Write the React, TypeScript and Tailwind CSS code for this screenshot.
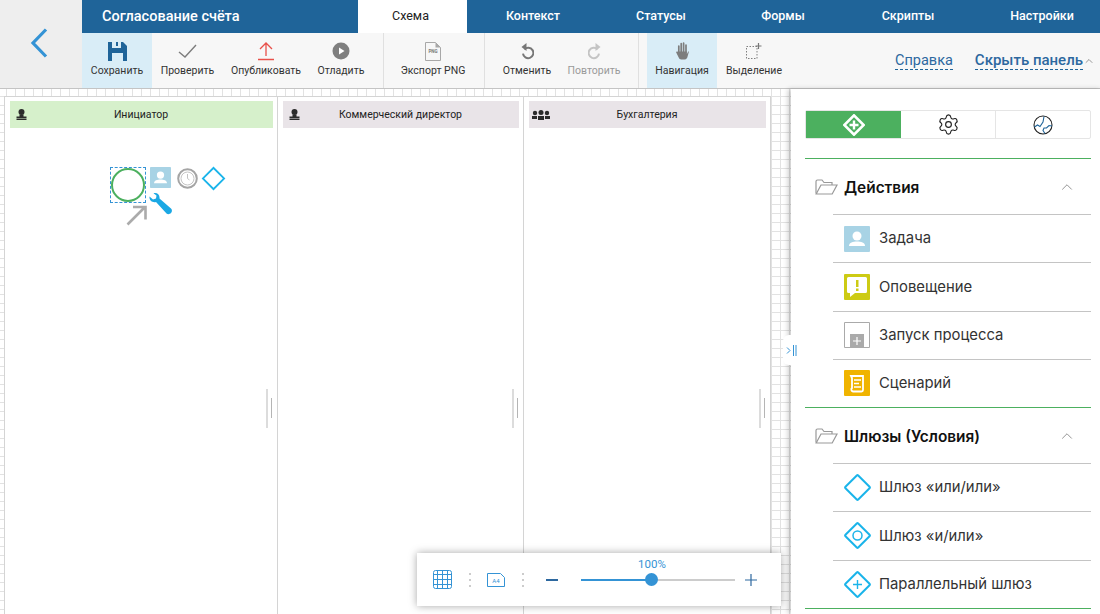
import { ChevronUp, Settings } from "lucide-react";
import type { ReactNode } from "react";

const FONT = "font-['Roboto','Liberation_Sans',sans-serif]";

const tabs = [
    { name: "Контекст", cls: "w-[132px]" },
    { name: "Статусы", cls: "w-[124px]" },
    { name: "Формы", cls: "w-[120px]" },
    { name: "Скрипты", cls: "w-[130px]" },
    { name: "Настройки", cls: "w-[127px] pl-[11px]" },
];

function ToolButton({ icon, label, width, active, muted }: { icon: ReactNode; label: string; width: string; active?: boolean; muted?: boolean }) {
    return (
        <div className={`${width} h-full flex flex-col items-center shrink-0 ${active ? "bg-[#d9edf7]" : ""}`}>
            <div className="h-[33px] flex items-center justify-center pt-[3px]">{icon}</div>
            <span className={`text-[10.5px] leading-none whitespace-nowrap ${muted ? "text-[#9a9a9a]" : "text-[#333]"}`}>{label}</span>
        </div>
    );
}

function Divider() {
    return <div className="w-px h-full bg-[#e0e0e0] shrink-0" />;
}

function SaveIcon() {
    return (
        <svg width="19" height="19" viewBox="0 0 19 19">
            <path fill="#1f6499" fillRule="evenodd" d="M0 0h15l4 4v15H0zM4 0v6h9V0h-3v4H8V0zM4 11v8h11v-8z" />
        </svg>
    );
}

function CheckIcon() {
    return (
        <svg width="19" height="15" viewBox="0 0 19 15" fill="none">
            <path d="M1 8l6 5L18 1" stroke="#7d7d7d" strokeWidth="1.4" />
        </svg>
    );
}

function PublishIcon() {
    return (
        <svg width="16" height="19" viewBox="0 0 16 19" fill="none">
            <path d="M8 14V1M2 7l6-6 6 6" stroke="#e8504a" strokeWidth="1.3" />
            <path d="M0 17.5h16" stroke="#e8504a" strokeWidth="1.5" />
        </svg>
    );
}

function PlayIcon() {
    return (
        <svg width="18" height="18" viewBox="0 0 18 18">
            <circle cx="9" cy="9" r="8.5" fill="#7f7f7f" />
            <path d="M7 5.5l5.5 3.5L7 12.5z" fill="#fff" />
        </svg>
    );
}

function PngIcon() {
    return (
        <svg width="16" height="19" viewBox="0 0 16 19" fill="none">
            <path d="M.5.5h10l5 5v13H.5z" fill="#f7f7f7" stroke="#a8a8a8" />
            <path d="M10.5.5v5h5z" fill="#a8a8a8" />
            <text x="8" y="11" textAnchor="middle" fontSize="4.5" fontWeight="700" fill="#777" fontFamily="Roboto">PNG</text>
        </svg>
    );
}

function UndoIcon({ color, flip }: { color: string; flip?: boolean }) {
    return (
        <svg width="13" height="17" viewBox="0 0 13 17" fill="none" className={flip ? "-scale-x-100" : ""}>
            <path d="M3.4 6.4A5.2 5.2 0 1 1 2 10.6" stroke={color} strokeWidth="2" />
            <path d="M5.5 0v8L.5 4z" fill={color} />
        </svg>
    );
}

function HandIcon() {
    return (
        <svg width="13" height="18" viewBox="0 0 13 18" fill="none">
            <path d="M2.800 11V4M5.200 10V1.500M7.600 10V1.200M10 10V3" stroke="#7d7d7d" strokeWidth="1.700" strokeLinecap="round" />
            <path d="M1.900 9.500h9v2.500l1.500-2.700 .5.400-1.200 4.300c-.4 2-1.300 3.500-3 3.500H5.200c-1.200 0-1.900-.7-2.400-1.700L.2 10.500c-.3-.8.700-1.300 1.200-.7z" fill="#7d7d7d" />
        </svg>
    );
}

function SelectIcon() {
    return (
        <svg width="16" height="16" viewBox="0 0 16 16" fill="none">
            <path d="M.5 3.500h10.500v12H.5z" stroke="#808080" strokeDasharray="1.5 1.5" />
            <path d="M12.500 0v6M9.500 3h6" stroke="#777" strokeWidth="1.200" />
        </svg>
    );
}

function PersonIcon() {
    return (
        <svg width="11" height="11" viewBox="0 0 11 11">
            <circle cx="5.500" cy="3" r="3" fill="#2b2b2b" />
            <path d="M3.500 5.500h4v2h3v2H.5v-2h3zM.5 10h10v1H.5z" fill="#2b2b2b" />
        </svg>
    );
}

function GroupIcon() {
    return (
        <svg width="18" height="10" viewBox="0 0 18 10" fill="#2b2b2b" className="shrink-0">
            <circle cx="3" cy="3" r="2.200" />
            <circle cx="9" cy="2.500" r="2.500" />
            <circle cx="15" cy="3" r="2.200" />
            <path d="M0 6h5v3H0zM6 6h6v4H6zM13 6h5v3h-5z" />
        </svg>
    );
}

function TaskIcon({ size }: { size: number }) {
    return (
        <svg width={size} height={size} viewBox="0 0 26 26">
            <rect width="26" height="26" rx="1" fill="#a8d3e5" />
            <circle cx="13" cy="10" r="4.500" fill="#fff" />
            <path d="M5 20c0-3.500 4-4.500 8-4.500s8 1 8 4.500z" fill="#fff" />
        </svg>
    );
}

function AlertIcon() {
    return (
        <svg width="26" height="26" viewBox="0 0 26 26">
            <rect width="26" height="26" rx="1" fill="#cdcb14" />
            <path d="M4.500 3h17a1.500 1.500 0 0 1 1.500 1.500v13a1.500 1.500 0 0 1-1.500 1.500H11l-5 4v-4H4.500A1.500 1.500 0 0 1 3 17.500v-13A1.500 1.500 0 0 1 4.500 3z" fill="#fff" />
            <path d="M12 6h2.500v7H12zM12 14.500h2.500V17H12z" fill="#cdcb14" />
        </svg>
    );
}

function SubprocessIcon() {
    return (
        <svg width="26" height="26" viewBox="0 0 26 26" fill="none">
            <path d="M.5.5h25v25H.5z" fill="#fff" stroke="#aaa" />
            <rect x="6" y="12" width="14" height="14" fill="#aaa" />
            <path d="M13 15v8M9 19h8" stroke="#fff" strokeWidth="1.200" />
        </svg>
    );
}

function ScriptIcon() {
    return (
        <svg width="26" height="26" viewBox="0 0 26 26" fill="none">
            <rect width="26" height="26" rx="1" fill="#f0b400" />
            <path d="M7 6h12v14a1.500 1.500 0 0 1-1.500 1.500H9A2 2 0 0 1 8 18V8z" stroke="#fff" strokeWidth="1.800" />
            <path d="M10 10h7M10 13.500h5M10 17h7" stroke="#fff" strokeWidth="1.500" />
        </svg>
    );
}

function GatewayIcon({ inner }: { inner?: "circle" | "plus" }) {
    return (
        <svg width="27" height="27" viewBox="0 0 27 27" fill="none" stroke="#1ab4ea">
            <rect x="4.500" y="4.500" width="18" height="18" rx="1" transform="rotate(45 13.500 13.500)" strokeWidth="2" />
            {inner === "circle" && <circle cx="13.500" cy="13.500" r="4.500" strokeWidth="1.500" />}
            {inner === "plus" && <path d="M13.500 9v9M9 13.500h9" strokeWidth="1.400" />}
        </svg>
    );
}

function FolderIcon() {
    return (
        <svg width="23" height="16" viewBox="0 0 23 16" fill="none" stroke="#999" strokeWidth="1.200">
            <path d="M1 14.500V2.500A1.500 1.500 0 0 1 2.500 1H7l2 2.500h8V6" />
            <path d="M1.200 15h16l4.800-9H6z" />
        </svg>
    );
}

function PaletteIcon() {
    return (
        <svg width="22" height="22" viewBox="0 0 22 22" fill="none">
            <rect x="4.200" y="4.200" width="13.600" height="13.600" transform="rotate(45 11 11)" stroke="#fff" strokeWidth="2.600" />
            <path d="M11 6.500v9M6.500 11h9" stroke="#fff" strokeWidth="2.400" />
        </svg>
    );
}

function GlobeIcon() {
    return (
        <svg width="20" height="20" viewBox="0 0 20 20" fill="none" stroke="#222" strokeWidth="1.100">
            <circle cx="10" cy="10" r="9" />
            <path d="M1.500 12l3-2 2.500 1.500L10 7l1-5.500M19 11l-3-.5-2.500 2.500-2.500 0L10 15.500l2 3" stroke="#1f6499" />
        </svg>
    );
}

function Lane({ title, icon, width, header }: { title: string; icon: ReactNode; width: string; header: string }) {
    return (
        <div className={`${width} relative h-full border-r border-[#d4d4d4] shrink-0 pt-[4px] pl-[5px] pr-[4px]`}>
            <div className={`h-[27px] flex items-center text-[10.5px] text-[#222] pl-[6px] ${header}`}>
                <span className="w-[11px] flex justify-center">{icon}</span>
                <span className="flex-1 text-center pr-[18px]">{title}</span>
            </div>
            <div className="absolute top-[292px] right-[9px] w-[2px] h-[39px] bg-[#dcdcdc]" />
            <div className="absolute top-[301px] right-[5px] w-px h-[20px] bg-[#b5b5b5]" />
        </div>
    );
}

function PanelItem({ icon, label }: { icon: ReactNode; label: string }) {
    return (
        <div className="h-[48.25px] ml-[28px] border-t border-[#c4c4c4] flex items-center pl-[11px] box-border">
            <span className="w-[27px] flex justify-start">{icon}</span>
            <span className="ml-[8px] text-[14.85px] font-['Inter',sans-serif] text-[#333]">{label}</span>
        </div>
    );
}

function PanelHeader({ label }: { label: string }) {
    return (
        <div className="h-[55px] flex items-center pl-[10px] pr-[15px] pt-[1px]">
            <FolderIcon />
            <span className="ml-[6px] pt-[1px] text-[15.4px] font-['Inter',sans-serif] font-semibold text-[#111] flex-1">{label}</span>
            <ChevronUp size={18} strokeWidth={1.200} className="text-[#8a8a8a]" />
        </div>
    );
}

export default function App() {
    return (
        <div className={`${FONT} w-[1100px] h-[614px] overflow-hidden bg-white flex flex-col`}>
            <div className="flex h-[89px] shrink-0 border-b border-[#c4c4c4]">
                <div className="w-[82px] bg-[#eeeeee] flex items-center justify-center pr-[4px] pb-[2px]">
                    <svg width="18" height="30" viewBox="0 0 18 30" fill="none">
                        <path d="M16 1.500L3 15l13 13.500" stroke="#3493d5" strokeWidth="3.200" />
                    </svg>
                </div>
                <div className="flex-1 flex flex-col">
                    <div className="h-[33px] bg-[#1f6499] flex items-center text-white text-[12.5px] font-medium">
                        <div className="w-[276px] pl-[20px] text-[14.5px] font-medium">Согласование счёта</div>
                        <div className="w-[109px] h-full bg-white text-[#222] flex items-center justify-center font-normal pr-[4px]">Схема</div>
                        {tabs.map((tab) => (
                            <div key={tab.name} className={`${tab.cls} text-center`}>{tab.name}</div>
                        ))}
                    </div>
                    <div className="flex-1 bg-[#f7f7f7] flex items-stretch">
                        <ToolButton width="w-[70px]" active icon={<SaveIcon />} label="Сохранить" />
                        <ToolButton width="w-[71px]" icon={<CheckIcon />} label="Проверить" />
                        <ToolButton width="w-[86px]" icon={<PublishIcon />} label="Опубликовать" />
                        <ToolButton width="w-[64px]" icon={<PlayIcon />} label="Отладить" />
                        <div className="w-[10px]" />
                        <Divider />
                        <ToolButton width="w-[98px]" icon={<PngIcon />} label="Экспорт PNG" />
                        <div className="w-[2px]" />
                        <Divider />
                        <div className="w-[7px]" />
                        <ToolButton width="w-[70px]" icon={<UndoIcon color="#777" />} label="Отменить" />
                        <ToolButton width="w-[64px]" muted icon={<UndoIcon color="#c4c4c4" flip />} label="Повторить" />
                        <div className="w-[12px]" />
                        <Divider />
                        <div className="w-[8px]" />
                        <ToolButton width="w-[70px]" active icon={<HandIcon />} label="Навигация" />
                        <ToolButton width="w-[74px]" icon={<SelectIcon />} label="Выделение" />
                        <div className="flex-1 flex items-start pt-[19px] pl-[104px] text-[#2d689f]">
                            <span className="text-[14.5px] leading-[17px] border-b border-dashed border-[#1f6499]">Справка</span>
                            <span className="ml-[22px] text-[15px] leading-[17px] font-medium border-b border-dashed border-[#1f6499] whitespace-nowrap">Скрыть панель</span>
                            <ChevronUp size={12} strokeWidth={1.200} className="text-[#555] mt-[3px] shrink-0" />
                        </div>
                    </div>
                </div>
            </div>

            <div className="flex-1 flex min-h-0">
                <div className="relative w-[791px] shrink-0 bg-white bg-[linear-gradient(#e2e2e2_1px,transparent_1px),linear-gradient(90deg,#e2e2e2_1px,transparent_1px)] bg-[size:9px_9px] bg-[position:6px_7px] pt-[7px] pl-[4px]">
                    <div className="flex w-[767px] h-[600px] bg-white border-l border-t border-[#d4d4d4]">
                        <Lane width="w-[273px]" title="Инициатор" icon={<PersonIcon />} header="bg-[#d6f0cb]" />
                        <Lane width="w-[246px]" title="Коммерческий директор" icon={<PersonIcon />} header="bg-[#e9e4e8]" />
                        <Lane width="w-[247px]" title="Бухгалтерия" icon={<GroupIcon />} header="bg-[#e9e4e8]" />
                    </div>

                    {/* start node and its context tools */}
                    <div className="absolute left-[110px] top-[78px] w-[36px] h-[36px] border border-dashed border-[#3493d5] flex items-center justify-center">
                        <div className="w-[34px] h-[34px] rounded-full border-[2.5px] border-[#4cb05f]" />
                    </div>
                    <div className="absolute left-[150px] top-[78px]"><TaskIcon size={21} /></div>
                    <div className="absolute left-[177px] top-[79px]">
                        <svg width="21" height="21" viewBox="0 0 21 21" fill="none">
                            <circle cx="10.500" cy="10.500" r="9.300" stroke="#a5a5a5" strokeWidth="2" />
                            <circle cx="10.500" cy="10.500" r="6.500" stroke="#c4c4c4" />
                            <path d="M10.500 6v4.500l2 1.500" stroke="#c4c4c4" />
                        </svg>
                    </div>
                    <div className="absolute left-[201px] top-[77px]">
                        <svg width="25" height="25" viewBox="0 0 25 25" fill="none">
                            <rect x="5" y="5" width="15" height="15" transform="rotate(45 12.500 12.500)" stroke="#1ab4ea" strokeWidth="1.800" />
                        </svg>
                    </div>
                    <div className="absolute left-[149px] top-[104px]">
                        <svg width="23" height="23" viewBox="0 0 23 23">
                            <path fill="#1ba8e4" d="M.5 3.500L4 6.500l3-1 .5-3L4.500.3C8-.8 11 2 10.500 5.500L22 15.500c1.500 1.500 1 3.500 0 4.500s-3 1.800-4.500.5L7 9C3.500 10 0 7.500.5 3.500z" />
                        </svg>
                    </div>
                    <div className="absolute left-[126px] top-[116px]">
                        <svg width="21" height="21" viewBox="0 0 21 21" fill="none" stroke="#ababab" strokeWidth="2.600">
                            <path d="M1.500 19.500L19 2M7 2h12.500v12.500" />
                        </svg>
                    </div>

                    {/* grid and zoom controls */}
                    <div className="absolute left-[417px] top-[464px] w-[364px] h-[53px] bg-white shadow-[0_0_8px_rgba(0,0,0,0.35)] flex items-center pl-[16px]">
                        <svg width="19" height="19" viewBox="0 0 19 19" fill="none" stroke="#3493d5">
                            <rect x=".5" y=".5" width="18" height="18" rx="2" />
                            <path d="M4.500 1v17M9.500 1v17M14.500 1v17M1 4.500h17M1 9.500h17M1 14.500h17" />
                        </svg>
                        <div className="ml-[17px] flex flex-col gap-[4px]">
                            <span className="w-[2px] h-[2px] bg-[#ccc]" /><span className="w-[2px] h-[2px] bg-[#ccc]" /><span className="w-[2px] h-[2px] bg-[#ccc]" />
                        </div>
                        <svg className="ml-[16px]" width="18" height="14" viewBox="0 0 18 14" fill="none">
                            <path d="M.5.500h13l4 4v9H.5z" stroke="#3493d5" />
                            <text x="9" y="10" textAnchor="middle" fontSize="6" fill="#3493d5" fontFamily="Roboto">A4</text>
                        </svg>
                        <div className="ml-[17px] flex flex-col gap-[4px]">
                            <span className="w-[2px] h-[2px] bg-[#ccc]" /><span className="w-[2px] h-[2px] bg-[#ccc]" /><span className="w-[2px] h-[2px] bg-[#ccc]" />
                        </div>
                        <span className="ml-[22px] w-[12px] h-[2px] bg-[#2d689f]" />
                        <div className="relative ml-[23px] w-[154px] h-[2px] bg-[#cccccc]">
                            <div className="w-[70px] h-full bg-[#3493d5]" />
                            <div className="absolute left-[64px] top-[-5.5px] w-[13px] h-[13px] rounded-full bg-[#3493d5]" />
                            <span className="absolute left-[57px] top-[-22px] text-[11.5px] leading-[14px] text-[#3493d5]">100%</span>
                        </div>
                        <svg className="ml-[10px]" width="12" height="12" viewBox="0 0 12 12" stroke="#2d689f" strokeWidth="1.200">
                            <path d="M6 0v12M0 6h12" />
                        </svg>
                    </div>
                </div>

                <div className="relative flex-1 bg-white shadow-[-3px_0_5px_rgba(0,0,0,0.2)] pl-[14px] pr-[12px] pt-[21px]">
                    {/* collapse handle */}
                    <div className="absolute left-[-8px] top-[246px] w-[16px] h-[30px] bg-white rounded-l-[6px] flex items-center justify-center">
                        <svg width="11" height="11" viewBox="0 0 11 11" fill="none" stroke="#3493d5">
                            <path d="M1 2.500l3 3-3 3M7.500 0v11M10 0v11" />
                        </svg>
                    </div>
                    <div className="w-[286px] h-[29px] flex border border-[#e5e5e5] rounded-[2px]">
                        <div className="w-[95px] bg-[#4cb05f] flex items-center justify-center"><PaletteIcon /></div>
                        <div className="w-[95px] border-r border-[#e5e5e5] flex items-center justify-center">
                            <Settings size={23} strokeWidth={1.200} className="text-[#222]" />
                        </div>
                        <div className="flex-1 flex items-center justify-center"><GlobeIcon /></div>
                    </div>
                    <div className="mt-[19px] border-t border-[#4cb05f]">
                        <PanelHeader label="Действия" />
                        <PanelItem icon={<TaskIcon size={26} />} label="Задача" />
                        <PanelItem icon={<AlertIcon />} label="Оповещение" />
                        <PanelItem icon={<SubprocessIcon />} label="Запуск процесса" />
                        <PanelItem icon={<ScriptIcon />} label="Сценарий" />
                    </div>
                    <div className="border-t border-[#4cb05f]">
                        <PanelHeader label="Шлюзы (Условия)" />
                        <PanelItem icon={<GatewayIcon />} label="Шлюз «или/или»" />
                        <PanelItem icon={<GatewayIcon inner="circle" />} label="Шлюз «и/или»" />
                        <PanelItem icon={<GatewayIcon inner="plus" />} label="Параллельный шлюз" />
                    </div>
                    <div className="border-t border-[#4cb05f]" />
                </div>
            </div>
        </div>
    );
}
